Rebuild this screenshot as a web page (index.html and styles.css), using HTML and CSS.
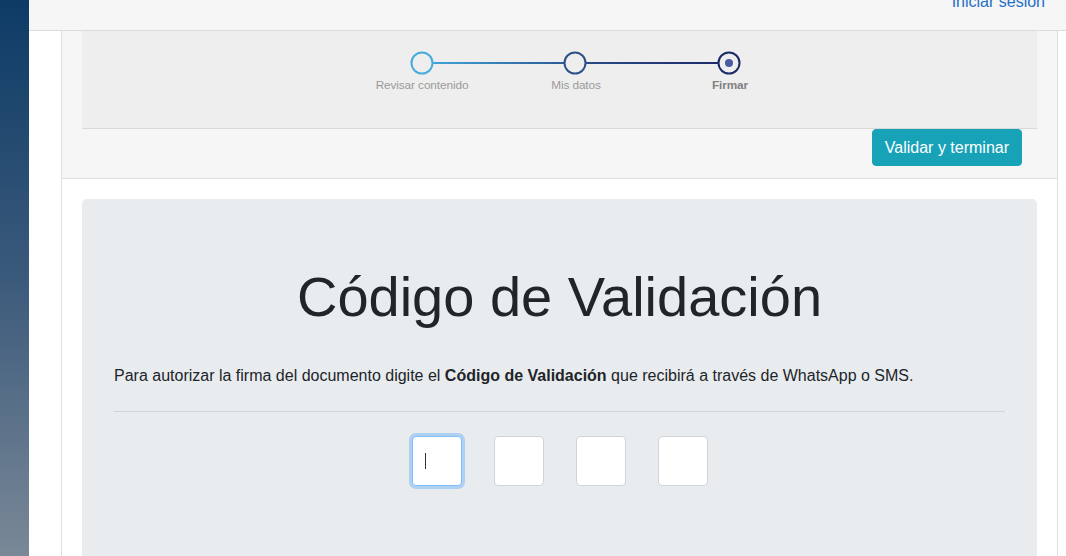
FILE: index.html
```html
<!DOCTYPE html>
<html lang="es">
<head>
<meta charset="utf-8">
<title>Código de Validación</title>
<link rel="stylesheet" href="styles.css">
</head>
<body>
<div class="layout">
  <aside class="sidebar"></aside>
  <div class="main">
    <header class="topbar">
      <a class="login" href="#">Iniciar sesión</a>
    </header>
    <div class="content">
      <section class="card">
        <div class="card-header">
          <div class="stepper-box">
            <div class="stepper">
              <svg class="stepper-graph" width="462" height="26" viewBox="0 0 462 26">
                <defs>
                  <linearGradient id="l1" gradientUnits="userSpaceOnUse" x1="88" y1="13" x2="219" y2="13">
                    <stop offset="0" stop-color="#3fa3d8"/>
                    <stop offset="1" stop-color="#2c5a95"/>
                  </linearGradient>
                  <linearGradient id="l2" gradientUnits="userSpaceOnUse" x1="241" y1="13" x2="373" y2="13">
                    <stop offset="0" stop-color="#284b86"/>
                    <stop offset="1" stop-color="#1d2b6a"/>
                  </linearGradient>
                </defs>
                <rect x="88" y="12" width="131" height="2" fill="url(#l1)"/>
                <rect x="241" y="12" width="132" height="2" fill="url(#l2)"/>
                <circle cx="77" cy="13" r="10.5" fill="none" stroke="#45acdc" stroke-width="2"/>
                <circle cx="230" cy="13" r="10.5" fill="none" stroke="#2d5189" stroke-width="2"/>
                <circle cx="384" cy="13" r="10.5" fill="none" stroke="#1c2a68" stroke-width="2"/>
                <circle cx="384" cy="13" r="4" fill="#4a5aa3"/>
              </svg>
              <div class="labels">
                <span class="label">Revisar contenido</span>
                <span class="label">Mis datos</span>
                <span class="label active">Firmar</span>
              </div>
            </div>
          </div>
          <div class="actions">
            <button class="btn-info" type="button">Validar y terminar</button>
          </div>
        </div>
        <div class="card-body">
          <div class="jumbotron">
            <h1 class="display">Código de Validación</h1>
            <p class="intro">Para autorizar la firma del documento digite el <strong>Código de Validación</strong> que recibirá a través de WhatsApp o SMS.</p>
            <hr class="divider">
            <div class="code-row">
              <div class="code-wrap">
                <input class="code-input focused" type="text" maxlength="1" aria-label="Dígito 1">
                <span class="caret"></span>
              </div>
              <input class="code-input" type="text" maxlength="1" aria-label="Dígito 2">
              <input class="code-input" type="text" maxlength="1" aria-label="Dígito 3">
              <input class="code-input" type="text" maxlength="1" aria-label="Dígito 4">
            </div>
          </div>
        </div>
      </section>
    </div>
  </div>
</div>
</body>
</html>
```

FILE: styles.css
```css
* { box-sizing: border-box; }

html, body {
  margin: 0;
  padding: 0;
  height: 100%;
  overflow: hidden;
  background: #fff;
  font-family: "Liberation Sans", Arial, sans-serif;
  color: #212529;
}

.layout {
  display: flex;
  height: 556px;
}

.sidebar {
  width: 29px;
  flex: 0 0 29px;
  background: linear-gradient(to bottom, #0d3b66 0%, #3b5a7b 50%, #7a8897 100%);
}

.main {
  flex: 1;
  display: flex;
  flex-direction: column;
  min-width: 0;
}

.topbar {
  height: 31px;
  flex: 0 0 31px;
  background: #f6f6f6;
  border-bottom: 1px solid #dcdcdc;
  display: flex;
  justify-content: flex-end;
  align-items: flex-start;
  padding-right: 21px;
  overflow: hidden;
}

.login {
  margin-top: -10px;
  font-size: 16px;
  line-height: 24px;
  color: #1f6fc5;
  text-decoration: none;
}

.content {
  flex: 1;
  padding: 0 8px 0 32px;
  overflow: hidden;
}

.card {
  border: 1px solid #dfdfdf;
  border-top: none;
  min-height: 700px;
  background: #fff;
}

.card-header {
  background: #f6f6f6;
  border-bottom: 1px solid #dfdfdf;
  padding: 0 20px 12px 20px;
}

.stepper-box {
  background: #eeeeee;
  border-bottom: 1px solid #d8d8d8;
  height: 98px;
  padding-top: 19px;
}

.stepper {
  width: 462px;
  margin-left: 263px;
}

.stepper-graph {
  display: block;
}

.labels {
  display: flex;
  margin-top: 2px;
}

.label {
  flex: 1;
  text-align: center;
  font-family: "Liberation Sans", Arial, sans-serif;
  font-size: 11.8px;
  line-height: 14px;
  color: #9a9a9a;
  letter-spacing: -0.1px;
}

.label.active {
  font-weight: bold;
  color: #808080;
}

.actions {
  display: flex;
  justify-content: flex-end;
  padding-right: 15px;
}

.btn-info {
  background: #17a2b8;
  color: #fff;
  border: 1px solid #17a2b8;
  border-radius: 4px;
  font-family: "Liberation Sans", Arial, sans-serif;
  font-size: 16px;
  line-height: 24px;
  padding: 6px 12px;
  height: 37px;
  cursor: pointer;
}

.card-body {
  padding: 20px;
}

.jumbotron {
  background: #e9ecef;
  border-radius: 5px;
  padding: 64px 32px;
  min-height: 480px;
}

.display {
  margin: 0 0 34px 0;
  font-size: 56px;
  font-weight: 300;
  line-height: 1.2;
  text-align: center;
  color: #212529;
}

.intro {
  margin: 0;
  font-size: 16px;
  line-height: 24px;
  color: #212529;
}

.divider {
  margin: 23px 0 24px 0;
  border: 0;
  border-top: 1px solid #d2d5d8;
}

.code-row {
  display: flex;
  justify-content: center;
  gap: 32px;
}

.code-wrap {
  position: relative;
  width: 50px;
  height: 50px;
}

.code-input {
  width: 50px;
  height: 50px;
  border: 1px solid #ced4da;
  border-radius: 4px;
  background: #fff;
  font-size: 16px;
  text-align: center;
  outline: none;
  padding: 0;
  caret-color: transparent;
}

.code-input.focused {
  border-color: #80bdff;
  box-shadow: 0 0 0 3px rgba(0, 123, 255, 0.25);
}

.caret {
  position: absolute;
  left: 13px;
  top: 17px;
  width: 1px;
  height: 16px;
  background: #333;
}
```
